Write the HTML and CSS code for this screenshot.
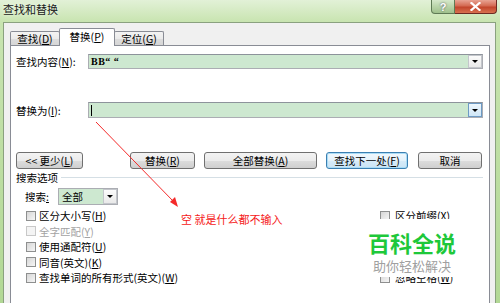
FILE: index.html
```html
<!DOCTYPE html>
<html lang="zh-CN">
<head>
  <meta charset="UTF-8" />
  <title>查找和替换</title>
  <link rel="stylesheet" href="styles.css">
</head>
<body>

<div class="window">
  <div class="titlebar">
    <span class="title">查找和替换</span>
    <div class="caption">
      <span class="cap-help">?</span>
      <span class="cap-close">
        <svg width="11" height="9" viewBox="0 0 11 9"><path d="M1.5 1 L9.5 8 M9.5 1 L1.5 8" stroke="#fff" stroke-width="2.2" stroke-linecap="square"/></svg>
      </span>
    </div>
  </div>

  <div class="dialog">
    <div class="tabs">
      <div class="tab">查找(<u>D</u>)</div>
      <div class="tab active">替换(<u>P</u>)</div>
      <div class="tab">定位(<u>G</u>)</div>
    </div>

    <div class="panel">
      <div class="field-row">
        <label>查找内容(<u>N</u>):</label>
        <div class="combo">
          <span class="combo-text">BB“ “</span>
          <span class="drop"></span>
        </div>
      </div>

      <div class="field-row replace-row">
        <label>替换为(<u>I</u>):</label>
        <div class="combo">
          <span class="combo-text"><span class="caret"></span></span>
          <span class="drop hot"></span>
        </div>
      </div>

      <div class="buttons">
        <button class="btn btn-less">&lt;&lt; 更少(<u>L</u>)</button>
        <button class="btn btn-replace">替换(<u>R</u>)</button>
        <button class="btn btn-all">全部替换(<u>A</u>)</button>
        <button class="btn btn-next focused">查找下一处(<u>F</u>)</button>
        <button class="btn btn-cancel">取消</button>
      </div>

      <div class="group-title">
        <span>搜索选项</span>
        <span class="line"></span>
      </div>

      <div class="search-row">
        <label>搜索<u>:</u></label>
        <div class="select">
          <span class="select-text">全部</span>
          <span class="drop"></span>
        </div>
      </div>

      <div class="options">
        <div class="col">
          <div class="opt"><span class="box"></span>区分大小写(<u>H</u>)</div>
          <div class="opt disabled"><span class="box"></span>全字匹配(<u>Y</u>)</div>
          <div class="opt"><span class="box"></span>使用通配符(<u>U</u>)</div>
          <div class="opt"><span class="box"></span>同音(英文)(<u>K</u>)</div>
          <div class="opt"><span class="box"></span>查找单词的所有形式(英文)(<u>W</u>)</div>
        </div>
        <!-- middle rows of this column sit under the watermark -->
        <div class="col right">
          <div class="opt"><span class="box"></span>区分前缀(<u>X</u>)</div>
          <div class="opt"></div>
          <div class="opt"></div>
          <div class="opt"></div>
          <div class="opt"><span class="box"></span>忽略空格(<u>W</u>)</div>
        </div>
      </div>
    </div>
  </div>

  <!-- red note drawn over the screenshot -->
  <svg class="arrow" width="500" height="303" viewBox="0 0 500 303">
    <line x1="96" y1="122" x2="174" y2="202" stroke="#f42a2a" stroke-width="1"/>
    <polygon points="178,207 170,202 175,197" fill="#f42a2a"/>
  </svg>
  <div class="note">空&nbsp;就是什么都不输入</div>

  <div class="watermark">
    <div class="wm-title">百科全说</div>
    <div class="wm-sub">助你轻松解决</div>
  </div>
</div>

</body>
</html>
```

FILE: styles.css
```css
* {
  box-sizing: border-box;
}

body {
  margin: 0;
  width: 500px;
  height: 303px;
  overflow: hidden;
  font-family: "Noto Sans CJK SC", "Liberation Sans", sans-serif;
  font-size: 10.5px;
  color: #000;
}

u {
  text-decoration: underline;
  text-underline-offset: 1px;
}

.window {
  position: relative;
  height: 303px;
  display: flex;
  flex-direction: column;
  background: linear-gradient(180deg, #e2f1d7 0%, #c8e4b0 22px, #b2d895 100%);
}

/* title bar */
.titlebar {
  height: 22px;
  display: flex;
  align-items: flex-start;
  padding-left: 3px;
}

.title {
  font-size: 11px;
  line-height: 13px;
  margin-top: 3px;
  color: #1a1a1a;
  text-shadow: 0 0 4px #f4fbef;
}

.caption {
  margin-left: auto;
  margin-right: 3px;
  display: flex;
}

.cap-help,
.cap-close {
  height: 14px;
  display: flex;
  align-items: center;
  justify-content: center;
  border: 1px solid #5f7a55;
  border-top: none;
}

.cap-help {
  width: 24px;
  border-radius: 0 0 0 4px;
  background: linear-gradient(180deg, #d6e8cb 0%, #b9d4a9 50%, #9fc08c 100%);
  color: #fff;
  font: bold 11px "Liberation Sans", sans-serif;
  text-shadow: 0 0 2px #445;
}

.cap-close {
  width: 42px;
  border-left: none;
  border-color: #6e2a22;
  border-radius: 0 0 4px 0;
  background: linear-gradient(180deg, #e8a393 0%, #d46a52 45%, #c2452c 55%, #d8714f 100%);
}

/* dialog body */
.dialog {
  flex: 1;
  margin: 0 4px 0 3px;
  background: #f0f0f0;
  border: 1px solid #8aa17f;
  border-bottom: none;
  padding: 5px 5px 0 6px;
  display: flex;
  flex-direction: column;
}

.tabs {
  display: flex;
  align-items: flex-start;
  height: 17px;
}

.tab {
  width: 50px;
  height: 14px;
  margin-top: 3px;
  border: 1px solid #898c95;
  border-bottom: none;
  background: linear-gradient(180deg, #f3f3f3 0%, #ebebeb 50%, #dddddd 51%, #d6d6d6 100%);
  text-align: center;
  line-height: 13px;
  border-radius: 2px 2px 0 0;
}

.tab + .tab {
  margin-left: -1px;
}

.tab.active {
  position: relative;
  z-index: 1;
  width: 56px;
  height: 18px;
  margin-top: 0;
  background: #fff;
  line-height: 16px;
}

.panel {
  flex: 1;
  background: #fff;
  border: 1px solid #898c95;
  border-bottom: none;
  padding: 8px 6px 0 5px;
}

.field-row {
  display: flex;
  align-items: center;
  height: 15px;
}

.field-row label {
  width: 72px;
}

.replace-row {
  height: 16px;
  margin-top: 33px;
}

.combo {
  flex: 1;
  height: 100%;
  display: flex;
  border: 1px solid #abadb3;
  border-top-color: #8d939b;
  background: #cde8d0;
}

.combo-text {
  flex: 1;
  display: flex;
  align-items: center;
  padding-left: 2px;
  font: bold 10px "Liberation Serif", serif;
  letter-spacing: 0.5px;
}

.caret {
  width: 1px;
  height: 11px;
  background: #000;
}

.drop {
  width: 14px;
  display: flex;
  align-items: center;
  justify-content: center;
  border: 1px solid #c3c6cb;
  background: linear-gradient(180deg, #fbfbfb 0%, #e9e9e9 100%);
}

.drop.hot {
  border-color: #6d9ac4;
  background: linear-gradient(180deg, #eef7fd 0%, #cfe6f7 100%);
}

.drop::after {
  content: "";
  border-left: 3px solid transparent;
  border-right: 3px solid transparent;
  border-top: 3px solid #000;
}

/* push buttons */
.buttons {
  display: flex;
  gap: 9px;
  height: 17px;
  margin-top: 34px;
}

.btn {
  height: 17px;
  padding: 0;
  border: 1px solid #707070;
  border-radius: 3px;
  background: linear-gradient(180deg, #f3f3f3 0%, #ebebeb 50%, #dddddd 51%, #cfcfcf 100%);
  font-family: inherit;
  font-size: 10.5px;
  line-height: 14px;
  color: #000;
}

.btn-less { width: 67px; }
.btn-replace { width: 65px; margin-left: auto; }
.btn-all { width: 113px; }
.btn-next { width: 82px; }
.btn-cancel { width: 64px; margin-left: 1px; margin-right: 1px; }

.btn.focused {
  border-color: #3c7fb1;
  box-shadow: inset 0 0 0 1px #a9dcf6;
  background: linear-gradient(180deg, #f1f8fd 0%, #e4f2fb 50%, #d6ebf8 51%, #cbe4f5 100%);
}

/* search options */
.group-title {
  display: flex;
  align-items: center;
  height: 14px;
  margin-top: 1px;
}

.group-title .line {
  flex: 1;
  height: 1px;
  margin-left: 3px;
  background: #d5dfe5;
}

.search-row {
  display: flex;
  align-items: center;
  height: 17px;
  margin-top: 4px;
  padding-left: 9px;
}

.search-row label {
  width: 33px;
}

.select {
  width: 60px;
  height: 17px;
  display: flex;
  border: 1px solid #abadb3;
  background: #cde8d0;
}

.select-text {
  flex: 1;
  padding-left: 3px;
  line-height: 15px;
}

.options {
  display: grid;
  grid-template-columns: 354px 1fr;
  padding-left: 10px;
  margin-top: 3px;
}

.opt {
  height: 15.5px;
  display: flex;
  align-items: center;
  white-space: nowrap;
}

.box {
  width: 10px;
  height: 10px;
  margin-right: 3px;
  border: 1px solid #8e8f8f;
  background: linear-gradient(135deg, #d6d6d6 0%, #f6f6f6 100%);
}

.right .box {
  margin-right: 5px;
}

.opt.disabled {
  color: #a3a3a3;
}

.opt.disabled .box {
  border-color: #c8c8c8;
  background: #f4f4f4;
}

/* overlays on the screenshot */
.arrow {
  position: absolute;
  left: 0;
  top: 0;
  pointer-events: none;
}

.note {
  position: absolute;
  left: 181px;
  top: 212px;
  font-size: 11px;
  line-height: 14px;
  color: #f52020;
}

.watermark {
  position: absolute;
  left: 362px;
  top: 219px;
  width: 100px;
  height: 58px;
  background: #fff;
  text-align: center;
}

.wm-title {
  margin-top: 12px;
  font-size: 22px;
  line-height: 22px;
  font-weight: bold;
  color: #1ec83a;
}

.wm-sub {
  margin-top: 5px;
  font-size: 13px;
  line-height: 15px;
  color: #a0a0a0;
}
```
